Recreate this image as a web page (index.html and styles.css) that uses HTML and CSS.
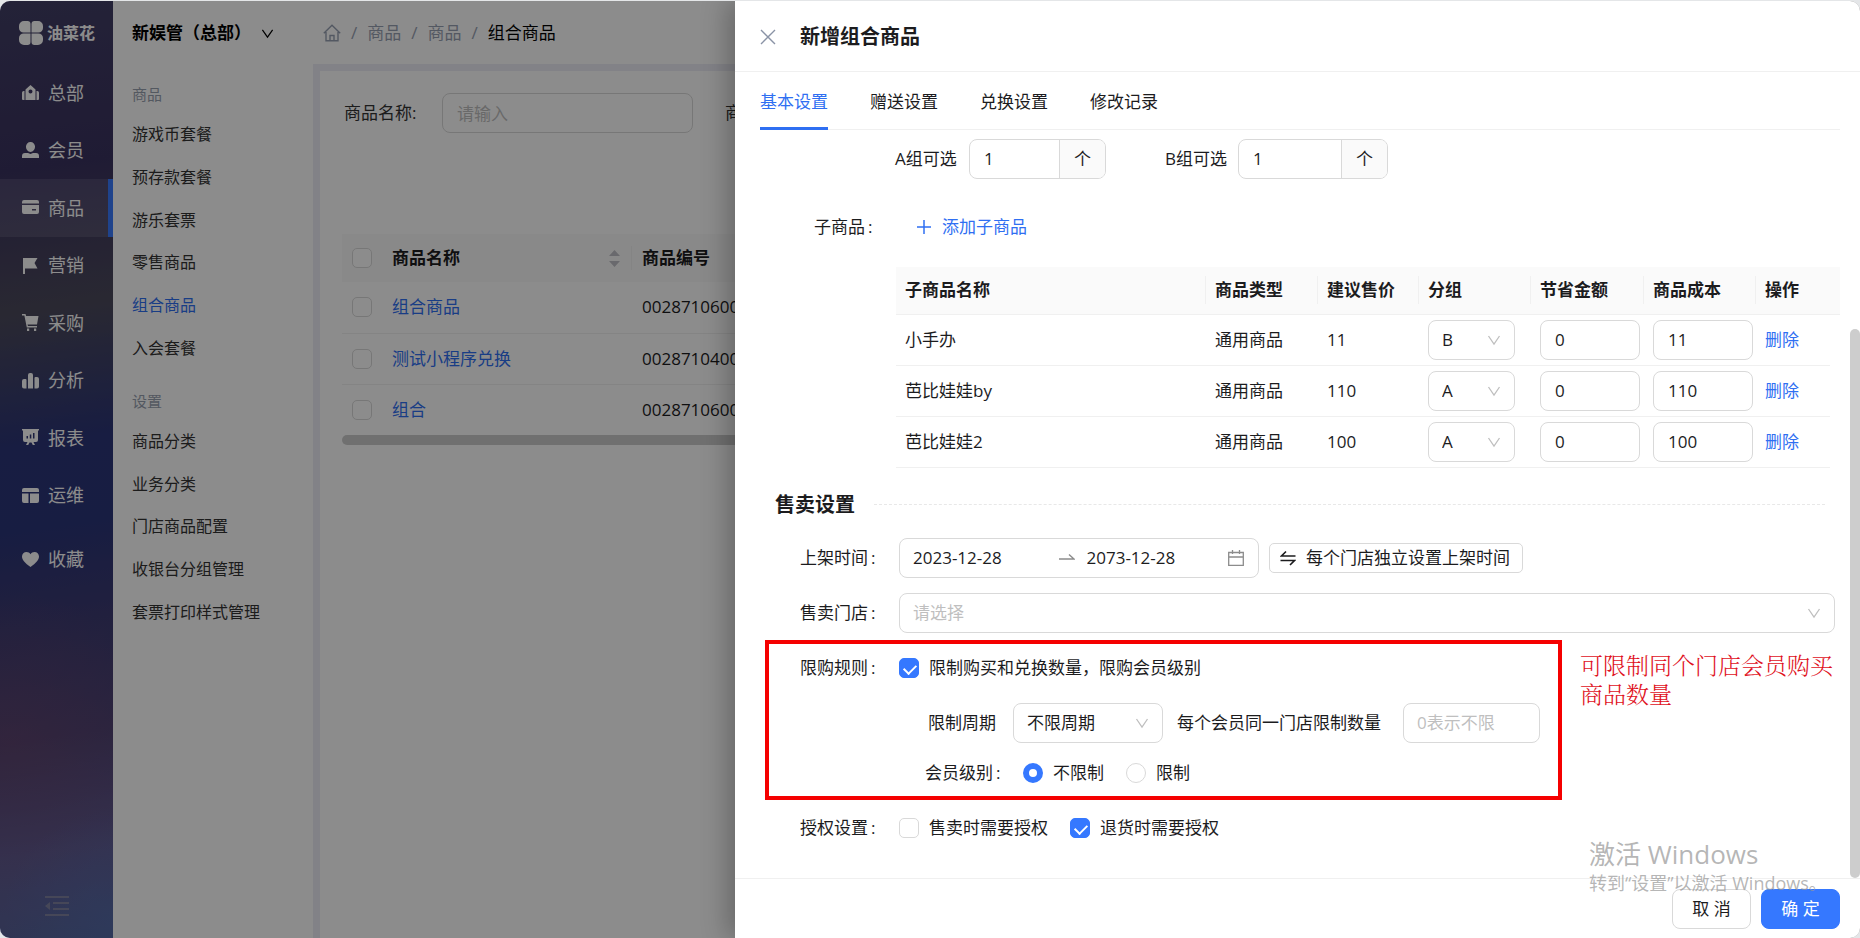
FILE: index.html
```html
<!DOCTYPE html>
<html lang="zh-CN">
<head>
<meta charset="utf-8">
<title>新增组合商品</title>
<link rel="stylesheet" href="styles.css">
</head>
<body>
<svg class="defs" aria-hidden="true">
  <symbol id="chevron" viewBox="0 0 14 14"><path d="M1.5 3 7 11 12.500 3" fill="none" stroke="currentColor" stroke-width="1.300"/></symbol>
</svg>
<div class="app">
  <aside class="side">
    <div class="brand">
      <svg width="24" height="24" viewBox="0 0 24 24" fill="currentColor"><path d="M5 0h3.500a3 3 0 0 1 3 3v8.500H4.500A4.500 4.500 0 0 1 0 7V5a5 5 0 0 1 5-5zM15.500 0H19a5 5 0 0 1 5 5v2a4.500 4.500 0 0 1-4.500 4.500h-7V3a3 3 0 0 1 3-3zM4.500 12.500h7V21a3 3 0 0 1-3 3H5a5 5 0 0 1-5-5v-2a4.500 4.500 0 0 1 4.500-4.500zM12.500 12.500h7A4.500 4.500 0 0 1 24 17v2a5 5 0 0 1-5 5h-3.500a3 3 0 0 1-3-3z"/></svg>
      <span>油菜花</span>
    </div>
    <nav class="mainnav">
      <a href="#"><svg viewBox="0 0 17 17"><path fill-rule="evenodd" d="M3.500 16V5.500L8.500 1l5 4.500V16zM8.500 5.500a2 2 0 1 0 0 4 2 2 0 0 0 0-4zM0 9a2 2 0 0 1 2.500-2v9H1a1 1 0 0 1-1-1zM17 9a2 2 0 0 0-2.500-2v9H16a1 1 0 0 0 1-1z"/></svg>总部</a>
      <a href="#"><svg viewBox="0 0 17 17"><path d="M8.500 0a4.500 4.500 0 0 1 4.500 4.800C13 7.500 11 10 8.500 10S4 7.500 4 4.800A4.500 4.500 0 0 1 8.500 0zM3 11h3l2.500 1L11 11h3a3 3 0 0 1 3 3v2H0v-2a3 3 0 0 1 3-3z"/></svg>会员</a>
      <a href="#" class="on"><svg viewBox="0 0 17 17"><path fill-rule="evenodd" d="M2 1h13a2 2 0 0 1 2 2v1.500H0V3a2 2 0 0 1 2-2zM0 6h17v7a2 2 0 0 1-2 2H2a2 2 0 0 1-2-2zM10 10v1.500h4V10z"/></svg>商品</a>
      <a href="#"><svg viewBox="0 0 17 17"><path d="M1 1h14.500l-3 5 3 5.500H3V17H1z"/></svg>营销</a>
      <a href="#"><svg viewBox="0 0 17 17"><path d="M0 0h3.500l.6 2H16.500L15 10.500H5.500L6 12h9v1.500H4.800L2.400 1.500H0zM5 14.500h2.200V17H5zM12 14.500h2.200V17H12z"/></svg>采购</a>
      <a href="#"><svg viewBox="0 0 17 17"><path d="M2 7h1.500a1 1 0 0 1 1 1v8.500H2a2 2 0 0 1-2-2V9a2 2 0 0 1 2-2zM8 1h1a2 2 0 0 1 2 2v13.500H6V3a2 2 0 0 1 2-2zM13.500 5H15a2 2 0 0 1 2 2v7.500a2 2 0 0 1-2 2h-2.500V6a1 1 0 0 1 1-1z"/></svg>分析</a>
      <a href="#"><svg viewBox="0 0 17 17"><path fill-rule="evenodd" d="M0 0h17v1.500h-1V11a2 2 0 0 1-2 2h-2.500l1.500 3h-2.200l-1.300-2.500h-2L6.200 16H4l1.500-3H3a2 2 0 0 1-2-2V1.500H0zM4.500 7v2.500H6V7zM7.800 5.500v4h1.500v-4zM11 4v5.500h1.500V4z"/></svg>报表</a>
      <a href="#"><svg viewBox="0 0 17 17"><path d="M2 1h13a2 2 0 0 1 2 2v2H0V3a2 2 0 0 1 2-2zM0 6.500h6.500V16H2a2 2 0 0 1-2-2zM8 6.500h9V14a2 2 0 0 1-2 2H8z"/></svg>运维</a>
    </nav>
    <nav class="mainnav fav">
      <a href="#"><svg viewBox="0 0 17 17"><path d="M8.500 16C3 12 0 9 0 5.500 0 3 2 1 4.500 1 6.200 1 7.700 1.800 8.500 3.200 9.300 1.800 10.800 1 12.500 1 15 1 17 3 17 5.500 17 9 14 12 8.500 16z"/></svg>收藏</a>
    </nav>
    <button class="fold" aria-label="收起菜单"><svg width="24" height="20" viewBox="0 0 24 20" fill="currentColor"><path d="M0 0h24v2H0zM8 6h16v2H8zM8 12h16v2H8zM0 18h24v2H0zM0 10l5-4v8z"/></svg></button>
  </aside>

  <aside class="sub">
    <button class="org">新娱管（总部）<svg width="13" height="13"><use href="#chevron"/></svg></button>
    <h2>商品</h2>
    <ul class="six">
      <li><a href="#">游戏币套餐</a></li>
      <li><a href="#">预存款套餐</a></li>
      <li><a href="#">游乐套票</a></li>
      <li><a href="#">零售商品</a></li>
      <li><a href="#" class="on">组合商品</a></li>
      <li><a href="#">入会套餐</a></li>
    </ul>
    <h2>设置</h2>
    <ul class="five">
      <li><a href="#">商品分类</a></li>
      <li><a href="#">业务分类</a></li>
      <li><a href="#">门店商品配置</a></li>
      <li><a href="#">收银台分组管理</a></li>
      <li><a href="#">套票打印样式管理</a></li>
    </ul>
  </aside>

  <main class="page">
    <nav class="crumbs">
      <a href="#" aria-label="首页"><svg width="18" height="18" viewBox="0 0 18 18" fill="none" stroke="currentColor" stroke-width="1.400"><path d="M.8 9.200 9 1.200l8.200 8M3 8v8.800h12V8M7 16.500v-5h4v5"/></svg></a>
      <span>/</span><a href="#">商品</a><span>/</span><a href="#">商品</a><span>/</span><b>组合商品</b>
    </nav>
    <section class="card">
      <div class="filters">
        <label for="q">商品名称:</label>
        <input id="q" class="box" type="text" placeholder="请输入">
        <span class="next">商</span>
      </div>
      <table class="list">
        <colgroup><col class="c-check"><col class="c-title"><col></colgroup>
        <thead>
          <tr><th><input type="checkbox" class="check" aria-label="全选"></th><th class="sortable"><div class="sort">商品名称<svg width="11" height="17" viewBox="0 0 11 17" fill="currentColor"><path d="M5.500 0 11 6H0zM5.500 17 0 11h11z"/></svg></div></th><th>商品编号</th></tr>
        </thead>
        <tbody>
          <tr><td><input type="checkbox" class="check" aria-label="选择组合商品"></td><td><a href="#">组合商品</a></td><td>0028710600</td></tr>
          <tr><td><input type="checkbox" class="check" aria-label="选择测试小程序兑换"></td><td><a href="#">测试小程序兑换</a></td><td>0028710400</td></tr>
          <tr><td><input type="checkbox" class="check" aria-label="选择组合"></td><td><a href="#">组合</a></td><td>0028710600</td></tr>
        </tbody>
      </table>
      <div class="hbar"></div>
    </section>
  </main>

  <div class="mask"></div>

  <section class="drawer" role="dialog" aria-labelledby="dt">
    <header class="dhead">
      <button class="close" aria-label="关闭"><svg width="16" height="16" viewBox="0 0 16 16" fill="none" stroke="currentColor" stroke-width="1.400"><path d="M1 1l14 14M15 1 1 15"/></svg></button>
      <h1 id="dt">新增组合商品</h1>
    </header>
    <div class="tabs" role="tablist">
      <button role="tab" class="on">基本设置</button>
      <button role="tab">赠送设置</button>
      <button role="tab">兑换设置</button>
      <button role="tab">修改记录</button>
    </div>
    <div class="dbody">
      <div class="groups">
        <label for="ga">A组可选</label>
        <div class="box addon"><input id="ga" type="text" value="1"><span>个</span></div>
        <label for="gb" class="gb">B组可选</label>
        <div class="box addon wide"><input id="gb" type="text" value="1"><span>个</span></div>
      </div>
      <div class="children">
        <span class="colon">子商品</span>
        <button class="add"><svg width="14" height="14" viewBox="0 0 14 14" stroke="currentColor" stroke-width="1.500"><path d="M7 0v14M0 7h14"/></svg>添加子商品</button>
      </div>
      <table class="items">
        <colgroup><col><col class="w112"><col class="w101"><col class="w112"><col class="w113"><col class="w112"><col class="w74"><col class="w10"></colgroup>
        <thead>
          <tr><th><div>子商品名称</div></th><th><div>商品类型</div></th><th><div>建议售价</div></th><th><div>分组</div></th><th><div>节省金额</div></th><th><div>商品成本</div></th><th>操作</th><th></th></tr>
        </thead>
        <tbody>
          <tr><td>小手办</td><td>通用商品</td><td>11</td>
            <td><div class="pick"><select class="box" aria-label="分组"><option>B</option><option>A</option></select><svg width="14" height="14"><use href="#chevron"/></svg></div></td>
            <td><input class="box num" type="text" value="0" aria-label="节省金额"></td><td><input class="box num" type="text" value="11" aria-label="商品成本"></td><td><a href="#">删除</a></td><td></td></tr>
          <tr><td>芭比娃娃by</td><td>通用商品</td><td>110</td>
            <td><div class="pick"><select class="box" aria-label="分组"><option>A</option><option>B</option></select><svg width="14" height="14"><use href="#chevron"/></svg></div></td>
            <td><input class="box num" type="text" value="0" aria-label="节省金额"></td><td><input class="box num" type="text" value="110" aria-label="商品成本"></td><td><a href="#">删除</a></td><td></td></tr>
          <tr><td>芭比娃娃2</td><td>通用商品</td><td>100</td>
            <td><div class="pick"><select class="box" aria-label="分组"><option>A</option><option>B</option></select><svg width="14" height="14"><use href="#chevron"/></svg></div></td>
            <td><input class="box num" type="text" value="0" aria-label="节省金额"></td><td><input class="box num" type="text" value="100" aria-label="商品成本"></td><td><a href="#">删除</a></td><td></td></tr>
        </tbody>
      </table>
      <h2 class="section">售卖设置</h2>
      <div class="form">
        <div class="row">
          <label class="colon" for="d1">上架时间</label>
          <div class="box range">
            <input id="d1" type="text" value="2023-12-28">
            <svg class="to" width="16" height="16" viewBox="0 0 16 16" fill="none" stroke="currentColor" stroke-width="1.400"><path d="M0 9h15L10 4.500"/></svg>
            <input type="text" value="2073-12-28" aria-label="结束日期">
            <svg width="16" height="16" viewBox="0 0 16 16" fill="none" stroke="currentColor" stroke-width="1.300"><path d="M.7 2.500h14.600v12.800H.7zM.7 7h14.600M4.500 0v4M11.500 0v4"/></svg>
          </div>
          <button class="swap"><svg width="16" height="16" viewBox="0 0 16 16" fill="none" stroke="currentColor" stroke-width="1.600"><path d="M15.500 6H1.500L6 1.500M.5 10.500h14L10 15"/></svg>每个门店独立设置上架时间</button>
        </div>
        <div class="row">
          <label class="colon" for="shop">售卖门店</label>
          <div class="pick grow"><select id="shop" class="box empty"><option>请选择</option></select><svg width="14" height="14"><use href="#chevron"/></svg></div>
        </div>
        <div class="limit">
          <div class="row">
            <span class="colon">限购规则</span>
            <label class="opt"><input type="checkbox" class="check" checked>限制购买和兑换数量，限购会员级别</label>
          </div>
          <div class="row nested">
            <label for="period">限制周期</label>
            <div class="pick period"><select id="period" class="box"><option>不限周期</option></select><svg width="14" height="14"><use href="#chevron"/></svg></div>
            <label for="max" class="maxlabel">每个会员同一门店限制数量</label>
            <input id="max" class="box max" type="text" placeholder="0表示不限">
          </div>
          <div class="row nested short">
            <span class="colon">会员级别</span>
            <label class="opt first"><input type="radio" name="lv" class="radio" checked>不限制</label>
            <label class="opt"><input type="radio" name="lv" class="radio">限制</label>
          </div>
          <div class="frame"></div>
          <p class="note">可限制同个门店会员购买商品数量</p>
        </div>
        <div class="row auth">
          <span class="colon">授权设置</span>
          <label class="opt"><input type="checkbox" class="check">售卖时需要授权</label>
          <label class="opt"><input type="checkbox" class="check" checked>退货时需要授权</label>
        </div>
      </div>
      <div class="vbar"></div>
    </div>
    <footer class="dfoot">
      <button class="btn">取 消</button>
      <button class="btn primary">确 定</button>
    </footer>
    <div class="activate"><p>激活 Windows</p><p class="small">转到“设置”以激活 Windows。</p></div>
  </section>
</div>
</body>
</html>
```
FILE: styles.css
```css
* { box-sizing: border-box; }
body {
  margin: 0;
  padding-top: 1px;
  background: #e4e6e8;
  font: 17px/24px "Open Sans", "Noto Sans CJK SC", sans-serif;
  color: #1c1c1e;
}
h1, h2, p, ul { margin: 0; padding: 0; }
ul { list-style: none; }
a { color: #2f6ff2; text-decoration: none; }
button, input, select { font: inherit; color: inherit; }
button { padding: 0; border: 0; background: none; cursor: pointer; white-space: nowrap; }
svg { flex: none; }
.defs { position: absolute; width: 0; height: 0; }

.app {
  position: relative;
  display: grid;
  grid-template-columns: 113px 200px minmax(0, 1fr);
  height: calc(100vh - 1px);
  overflow: hidden;
  border-radius: 10px;
  background: #fff;
}

/* primary sidebar */
.side {
  display: flex;
  flex-direction: column;
  color: #fff;
  background:
    radial-gradient(circle at 100% 98%, rgba(80, 120, 190, .35), transparent 110px),
    radial-gradient(circle at 10% 79%, rgba(120, 70, 100, .35), transparent 150px),
    linear-gradient(172deg, #423f66 0%, #3a3260 18%, #4c4a5c 33%, #2c3578 47%, #2b3578 56%, #3d3b72 66%, #4c4274 78%, #605a90 90%, #566298 100%);
}
.brand { display: flex; align-items: center; gap: 4px; height: 63px; padding-left: 19px; font-size: 16px; font-weight: 700; }
.mainnav { display: grid; grid-auto-rows: 1fr; height: 460px; font-size: 18px; }
.mainnav a { display: flex; align-items: center; gap: 9px; padding-left: 22px; color: #fff; }
.mainnav svg { width: 17px; height: 17px; fill: currentColor; }
.mainnav .on { background: rgba(255, 255, 255, .1); border-right: 5px solid #3a7bff; }
.fav { height: 58px; margin-top: 6px; }
.fold { display: flex; margin: auto 0 22px 45px; color: #8082a0; }

/* secondary menu */
.sub { padding-left: 19px; font-size: 16px; }
.org { display: flex; align-items: center; gap: 10px; height: 64px; font-size: 17px; font-weight: 700; color: #000; }
.sub h2 { height: 38px; margin-top: 10px; font-size: 15px; font-weight: 400; line-height: 38px; color: #98a1b0; }
.sub ul + h2 { margin-top: 13px; }
.sub ul { display: grid; grid-auto-rows: 1fr; align-items: center; }
.six { height: 256px; }
.five { height: 213px; }
.sub a { color: #333; }
.sub a.on { color: #2f6ff2; }

/* list page behind the drawer */
.page { display: grid; grid-template-rows: 63px 1fr; }
.crumbs { display: flex; align-items: center; gap: 10px; padding-left: 10px; color: #98a1b3; }
.crumbs a { display: flex; color: inherit; }
.crumbs b { font-weight: 400; color: #000; }
.card { border: 7px solid #ededf6; border-width: 7px 0 0 7px; padding: 22px 22px 0; overflow: hidden; }
.filters { display: flex; align-items: center; padding-left: 2px; color: #333; }
.filters label { width: 98px; flex: none; }
.filters .box { width: 251px; padding: 0 14px; flex: none; }
.filters .next { margin-left: 32px; }
.list { width: 100%; margin-top: 101px; border-collapse: collapse; table-layout: fixed; text-align: left; }
.c-check { width: 40px; }
.c-title { width: 250px; }
.list th { height: 48px; background: #fafafa; }
.list td { height: 51px; border-bottom: 1px solid #f0f0f0; }
.list th, .list td { padding: 0 10px; }
.list .sortable { padding-right: 0; }
.list tbody tr:last-child td { border: 0; }
.sort { display: flex; align-items: center; justify-content: space-between; border-right: 1px solid #f0f0f0; padding-right: 11px; }
.sort svg { color: #bfbfc6; }
.hbar { height: 10px; margin-right: -22px; border-radius: 5px 0 0 5px; background: #cdcdcd; }

.mask { position: absolute; inset: 0; background: rgba(0, 0, 0, .45); }

/* shared controls */
.box { height: 40px; border: 1px solid #d9d9d9; border-radius: 8px; background: #fff; outline: 0; }
::placeholder { color: #bfbfbf; opacity: 1; }
.check, .radio { appearance: none; display: block; flex: none; width: 20px; height: 20px; margin: 0; border: 1px solid #d9d9d9; border-radius: 5px; background: #fff; }
.radio { border-radius: 50%; }
.check:checked { position: relative; border-color: #3578ff; background: #3578ff; }
.check:checked::after { content: ""; position: absolute; left: 6px; top: 3px; width: 6px; height: 10px; border: solid #fff; border-width: 0 2px 2px 0; transform: rotate(45deg); }
.radio:checked { border: 6px solid #3578ff; }
.pick { position: relative; }
.pick select { appearance: none; display: block; width: 100%; padding: 0 13px; }
.pick svg { position: absolute; right: 14px; top: 13px; color: #bfbfbf; pointer-events: none; }
.colon::after { content: ":"; margin-left: 3px; }

/* drawer */
.drawer {
  position: absolute;
  inset: 0 0 0 auto;
  display: flex;
  flex-direction: column;
  width: 1125px;
  max-width: 100%;
  background: #fff;
  box-shadow: -8px 0 24px rgba(0, 0, 0, .25);
}
.dhead { display: flex; align-items: center; gap: 24px; height: 71px; padding: 2px 0 0 25px; border-bottom: 1px solid #f0f0f0; }
.dhead h1 { font-size: 20px; line-height: 30px; }
.close { display: flex; color: #8a93a6; }
.tabs { display: flex; gap: 42px; height: 58px; margin: 0 20px 0 25px; border-bottom: 1px solid #f0f0f0; }
.tabs button { height: 58px; padding-top: 4px; border-bottom: 3px solid transparent; }
.tabs .on { color: #2f6ff2; border-color: #2f6ff2; }
.dbody { position: relative; flex: 1; min-height: 0; overflow: hidden; padding: 9px 20px 0 40px; }
.groups { display: flex; align-items: center; margin-left: 120px; }
.groups label { width: 74px; }
.groups .gb { width: 73px; margin-left: 59px; }
.addon { display: flex; width: 137px; overflow: hidden; }
.addon.wide { width: 150px; }
.addon input { flex: 1; min-width: 0; padding: 0 14px; border: 0; outline: 0; background: none; }
.addon span { width: 46px; border-left: 1px solid #d9d9d9; background: #fafafa; line-height: 38px; text-align: center; }
.children { display: flex; align-items: center; height: 40px; margin: 28px 0 20px 39px; }
.children .colon { width: 103px; }
.add { display: flex; align-items: center; gap: 11px; color: #2f6ff2; }

.items { width: calc(100% - 121px); margin-left: 121px; border-collapse: collapse; table-layout: fixed; text-align: left; }
.w112 { width: 112px; }
.w101 { width: 101px; }
.w113 { width: 113px; }
.w74 { width: 74px; }
.w10 { width: 10px; }
.items th { height: 47px; padding: 0 0 0 9px; background: #fafafa; border-bottom: 1px solid #f0f0f0; }
.items th div { border-right: 1px solid #f0f0f0; line-height: 28px; }
.items td { height: 51px; padding: 0 0 0 9px; border-bottom: 1px solid #f0f0f0; }
.items td:last-child { padding: 0; border: 0; }
.items .pick { width: 87px; }
.num { display: block; width: 100px; padding: 0 14px; }

.section { display: flex; align-items: center; gap: 19px; margin: 22px 15px 18px 0; font-size: 20px; line-height: 30px; }
.section::after { content: ""; flex: 1; border-top: 1px dashed #e8e8e8; }
.form { display: grid; gap: 15px; margin-right: 5px; }
.row { display: flex; align-items: center; height: 40px; }
.row > .colon:first-child { width: 124px; padding-left: 25px; flex: none; }
.grow { flex: 1; }
.empty { color: #bfbfbf; }
.range { display: flex; align-items: center; width: 360px; padding: 0 14px 0 13px; color: #8c8c8c; }
.range input { flex: 1; min-width: 0; padding: 0; border: 0; outline: 0; color: #1c1c1e; }
.range .to { margin: 0 12px 0 4px; }
.swap { display: flex; align-items: center; gap: 10px; height: 30px; margin-left: 10px; padding: 0 12px 0 10px; border: 1px solid #d9d9d9; border-radius: 5px; }
.opt { display: flex; align-items: center; gap: 10px; margin-right: 22px; }
.limit { position: relative; display: grid; gap: 15px; }
.nested { padding-left: 153px; }
.nested > label:first-child { width: 85px; }
.period { width: 150px; }
.maxlabel { flex: none; width: 240px; padding-left: 14px; }
.max { width: 137px; padding: 0 13px; }
.row.short { height: 30px; padding-left: 150px; }
.row.short > .colon:first-child { width: 98px; padding-left: 0; }
.frame { position: absolute; inset: -8px auto -12px -10px; width: 797px; border: 4px solid #f50000; pointer-events: none; }
.note { position: absolute; left: 805px; top: 2px; width: 256px; font-family: "Noto Serif CJK SC", "Noto Sans CJK SC", serif; font-size: 23px; line-height: 29px; font-weight: 300; color: #e0101c; }
.auth { margin-top: 5px; }
.vbar { position: absolute; right: 0; top: 199px; bottom: 0; width: 10px; border-radius: 5px; background: #cdcdcd; }

.dfoot { display: flex; justify-content: flex-end; gap: 10px; height: 60px; padding: 10px 20px 0; border-top: 1px solid #f0f0f0; }
.btn { width: 79px; height: 40px; border: 1px solid #d9d9d9; border-radius: 8px; background: #fff; }
.primary { border-color: #3578ff; background: #3578ff; color: #fff; }
.activate { position: absolute; right: 36px; bottom: 43px; width: 235px; color: rgba(150, 150, 150, .7); font-size: 26px; line-height: 34px; white-space: nowrap; pointer-events: none; }
.activate .small { font-size: 18px; line-height: 24px; }
```
